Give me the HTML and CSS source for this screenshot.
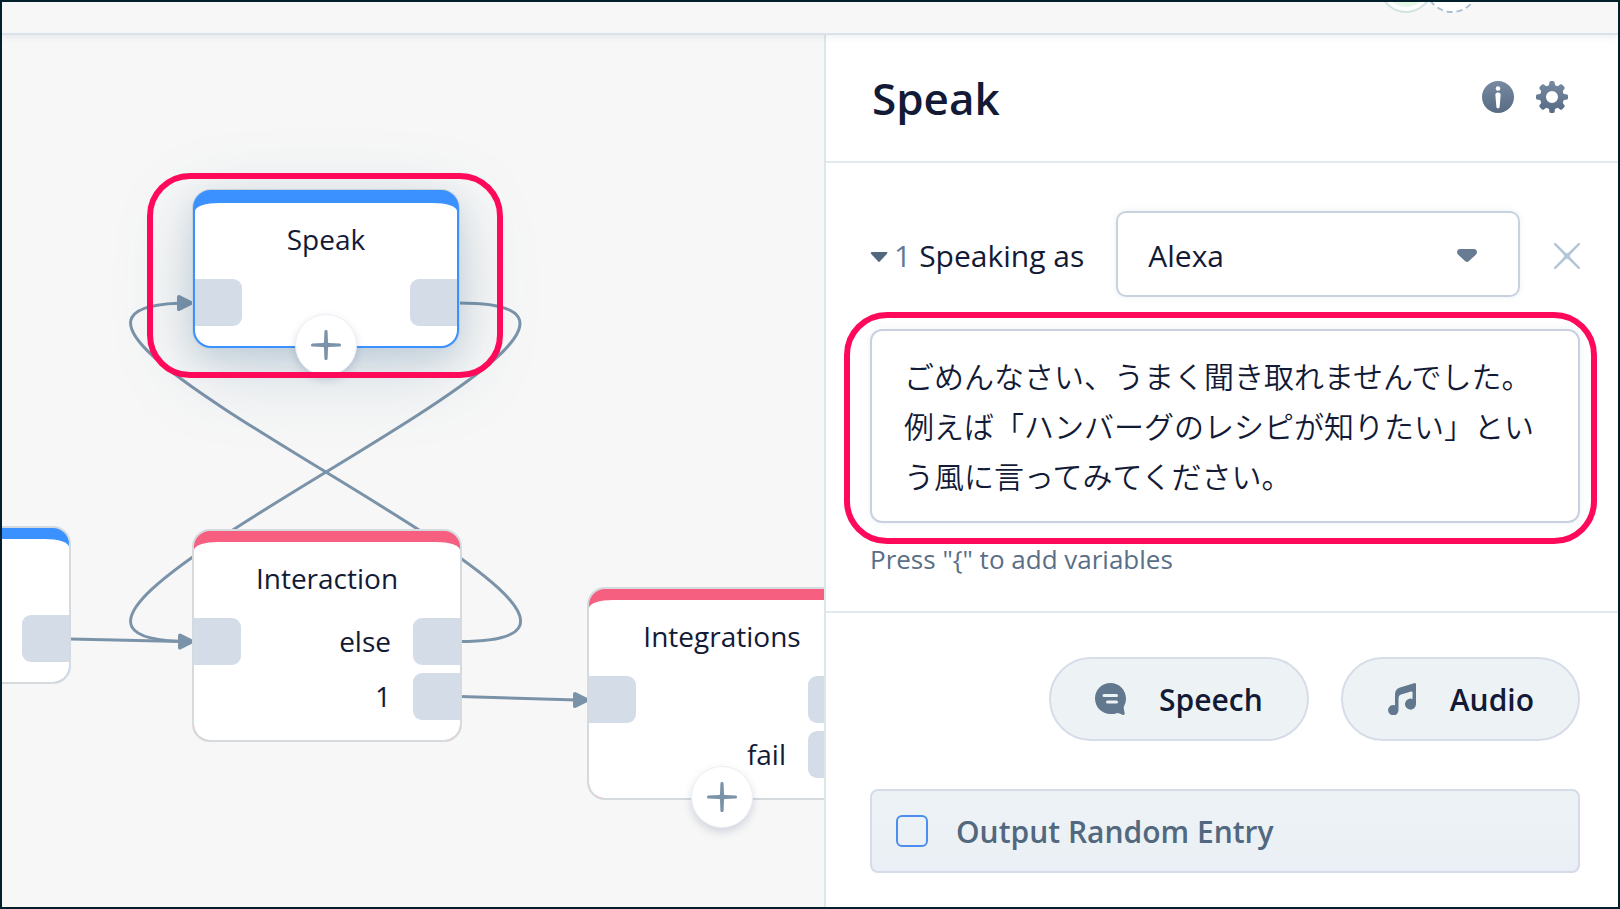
FILE: index.html
```html
<!DOCTYPE html>
<html lang="ja">
<head>
<meta charset="utf-8">
<title>Speak</title>
<link rel="stylesheet" href="styles.css">
</head>
<body>
<div class="app">
  <header class="topbar">
    <span class="avatar avatar--user"></span>
    <svg class="avatar" width="54" height="54" viewBox="0 0 54 54" aria-hidden="true"><circle cx="27" cy="27" r="26" fill="#fff" stroke="#a9bfd6" stroke-width="2" stroke-dasharray="6 4"/></svg>
  </header>
  <div class="workspace">
    <main class="canvas">
      <svg class="edges" aria-hidden="true">
        <g transform="translate(-2 -35)">
          <g class="edge-lines">
            <path d="M459 303C747 303 -94 641 190 641.500"/>
            <path d="M460 641.500C747 641.500 -94 303 190 303"/>
            <path d="M70 639L182 641.500"/>
            <path d="M460 696.500L577 700"/>
          </g>
          <g class="edge-heads">
            <path d="M179 297L191 303L179 309Z"/>
            <path d="M180 635.500L192 641.500L180 647.500Z"/>
            <path d="M575 694L587 700L575 706Z"/>
          </g>
        </g>
      </svg>

      <section class="node node--blue node--start">
        <div class="node__body">
          <h2 class="node__title"></h2>
          <div class="ports"><div class="ports__out"><div class="port-row"><span class="port port--out"></span></div></div></div>
        </div>
      </section>

      <section class="node node--blue node--speak">
        <div class="node__body">
          <h2 class="node__title">Speak</h2>
          <div class="ports">
            <span class="port port--in"></span>
            <div class="ports__out"><div class="port-row"><span class="port port--out"></span></div></div>
          </div>
        </div>
        <button class="add" type="button" aria-label="Add block">
          <svg width="32" height="32" viewBox="0 0 32 32"><path d="M16 1C17 1 17.500 1.600 17.600 2.500L18 12.800C18 13.600 18.400 14 19.200 14L29.500 14.400C30.500 14.500 31 15 31 16C31 17 30.500 17.500 29.500 17.600L19.200 18C18.400 18 18 18.400 18 19.200L17.600 29.500C17.500 30.500 17 31 16 31C15 31 14.500 30.500 14.400 29.500L14 19.200C14 18.400 13.600 18 12.800 18L2.500 17.600C1.500 17.500 1 17 1 16C1 15 1.500 14.500 2.500 14.400L12.800 14C13.600 14 14 13.600 14 12.800L14.400 2.500C14.500 1.600 15 1 16 1Z"/></svg>
        </button>
        <span class="marker marker--node"></span>
      </section>

      <section class="node node--red node--interaction">
        <div class="node__body">
          <h2 class="node__title">Interaction</h2>
          <div class="ports">
            <span class="port port--in"></span>
            <div class="ports__out">
              <div class="port-row">else<span class="port port--out"></span></div>
              <div class="port-row">1<span class="port port--out"></span></div>
            </div>
          </div>
        </div>
      </section>

      <section class="node node--red node--integrations">
        <div class="node__body">
          <h2 class="node__title">Integrations</h2>
          <div class="ports">
            <span class="port port--in"></span>
            <div class="ports__out">
              <div class="port-row"><span class="port port--out"></span></div>
              <div class="port-row">fail<span class="port port--out"></span></div>
            </div>
          </div>
        </div>
        <button class="add" type="button" aria-label="Add block">
          <svg width="32" height="32" viewBox="0 0 32 32"><path d="M16 1C17 1 17.500 1.600 17.600 2.500L18 12.800C18 13.600 18.400 14 19.200 14L29.500 14.400C30.500 14.500 31 15 31 16C31 17 30.500 17.500 29.500 17.600L19.200 18C18.400 18 18 18.400 18 19.200L17.600 29.500C17.500 30.500 17 31 16 31C15 31 14.500 30.500 14.400 29.500L14 19.200C14 18.400 13.600 18 12.800 18L2.500 17.600C1.500 17.500 1 17 1 16C1 15 1.500 14.500 2.500 14.400L12.800 14C13.600 14 14 13.600 14 12.800L14.400 2.500C14.500 1.600 15 1 16 1Z"/></svg>
        </button>
      </section>
    </main>

    <aside class="panel">
      <div class="panel__header">
        <h1 class="panel__title">Speak</h1>
        <div class="panel__actions">
          <button class="icon-button" type="button" aria-label="Info">
            <svg width="32" height="32" viewBox="0 0 32 32">
              <defs><linearGradient id="slate" x1="0" y1="0" x2="0" y2="32" gradientUnits="userSpaceOnUse"><stop offset="0" stop-color="#778aa1"/><stop offset="1" stop-color="#566b84"/></linearGradient></defs>
              <circle cx="16" cy="16" r="16" fill="url(#slate)"/>
              <circle cx="16" cy="7.500" r="2.300" fill="#fff"/>
              <path d="M16 11.500C17.800 11.500 18.700 12.300 18.600 14.200L17.600 26C17.500 27 17 27.200 16 27.200C15 27.200 14.500 27 14.400 26L13.400 14.200C13.300 12.300 14.200 11.500 16 11.500Z" fill="#fff"/>
            </svg>
          </button>
          <button class="icon-button" type="button" aria-label="Settings">
            <svg width="32" height="32" viewBox="0 0 32 32">
              <g fill="url(#slate)">
                <path fill-rule="evenodd" d="M16 4A12 12 0 1 0 16 28A12 12 0 1 0 16 4ZM16 10A6 6 0 1 1 16 22A6 6 0 1 1 16 10Z"/>
                <path d="M11.500 5.500C13 4.800 13.300 3.500 13.300 1.500Q13.500 0 15 0H17Q18.500 0 18.700 1.500C18.700 3.500 19 4.800 20.500 5.500Z"/>
                <path d="M11.500 26.500C13 27.200 13.300 28.500 13.300 30.500Q13.500 32 15 32H17Q18.500 32 18.700 30.500C18.700 28.500 19 27.200 20.500 26.500Z"/>
                <path d="M5.500 11.500C4.800 13 3.500 13.300 1.500 13.300Q0 13.500 0 15V17Q0 18.500 1.500 18.700C3.500 18.700 4.800 19 5.500 20.500Z"/>
                <path d="M26.500 11.500C27.200 13 28.500 13.300 30.500 13.300Q32 13.500 32 15V17Q32 18.500 30.500 18.700C28.500 18.700 27.200 19 26.500 20.500Z"/>
                <path d="M5 12.500C5.500 10.500 5 9.500 3.600 8Q3 7 3.600 6L6 3.600Q7 3 8 3.600C9.500 5 10.500 5.500 12.500 5Z"/>
                <path d="M27 12.500C26.500 10.500 27 9.500 28.400 8Q29 7 28.400 6L26 3.600Q25 3 24 3.600C22.500 5 21.500 5.500 19.500 5Z"/>
                <path d="M5 19.500C5.500 21.500 5 22.500 3.600 24Q3 25 3.600 26L6 28.400Q7 29 8 28.400C9.500 27 10.500 26.500 12.500 27Z"/>
                <path d="M27 19.500C26.500 21.500 27 22.500 28.400 24Q29 25 28.400 26L26 28.400Q25 29 24 28.400C22.500 27 21.500 26.500 19.500 27Z"/>
              </g>
            </svg>
          </button>
        </div>
      </div>

      <div class="entry">
        <div class="entry__row">
          <button class="toggle" type="button" aria-label="Collapse entry 1">
            <svg class="toggle__caret" width="18" height="12" viewBox="0 0 18 12"><path d="M2 1H16.500Q18 1.500 17 2.800L10 10.300Q9 11.500 8 10.300L1 2.800Q0 1.500 2 1Z" fill="#52687f"/></svg>
            <span>1</span>
          </button>
          <label class="entry__label" for="voice">Speaking as</label>
          <div class="select">
            <select id="voice"><option>Alexa</option></select>
            <svg class="select__arrow" width="20" height="14" viewBox="0 0 20 14"><path d="M2.500 0H17.500Q20 .3 20 3Q20 4.800 18.500 6L12 12Q10 14 8 12L1.500 6Q0 4.800 0 3Q0 .3 2.500 0Z" fill="#677b92"/></svg>
          </div>
          <button class="icon-button icon-button--close" type="button" aria-label="Remove entry">
            <svg width="26" height="26" viewBox="0 0 26 26"><path d="M0 0Q1.200 -.5 2.200 .6L11.500 9.500Q13 10.800 14.500 9.500L23.800 .6Q24.800 -.5 26 0Q26.500 1.200 25.400 2.200L16.500 11.500Q15.200 13 16.500 14.500L25.400 23.800Q26.500 24.800 26 26Q24.800 26.500 23.800 25.400L14.500 16.500Q13 15.200 11.500 16.500L2.200 25.400Q1.200 26.500 0 26Q-.5 24.800 .6 23.800L9.500 14.500Q10.800 13 9.500 11.500L.6 2.200Q-.5 1.200 0 0Z" fill="#b3c7d8"/></svg>
          </button>
        </div>
        <div class="message">
          <textarea class="message__input" rows="3" aria-label="Speech text" spellcheck="false">ごめんなさい、うまく聞き取れませんでした。例えば「ハンバーグのレシピが知りたい」という風に言ってみてください。</textarea>
          <span class="marker marker--message"></span>
        </div>
        <p class="hint">Press "{" to add variables</p>
      </div>

      <div class="panel__footer">
        <div class="add-buttons">
          <button class="pill" type="button">
            <svg width="32" height="32" viewBox="0 0 32 32"><path d="M15.500 0C24 0 31 6.800 31 15.500C31 18.500 30.200 21 29 23.300Q28.500 24.500 28.800 25.500L29.700 30.500Q29.700 32.300 28 31.900L24.500 30.400Q23 29.800 21.500 30.200C19.500 31 17.500 31 15.500 31C6.800 31 0 24 0 15.500C0 6.800 6.800 0 15.500 0Z" fill="#62788f"/><path d="M9 12.500H21.500M12.500 19H21.500" stroke="#edf3f5" stroke-width="3" stroke-linecap="round"/></svg>
            Speech
          </button>
          <button class="pill" type="button">
            <svg width="31" height="32" viewBox="-1 0 31 32"><path d="M7 24V11.500Q7 6 12 4.500L26 .2Q28 -.3 28 1.500V21A5.500 5.500 0 1 1 24.500 16V9.500Q24.500 8.200 23.200 8.600L13 11.500Q10.500 12.300 10.500 15V27A5.200 5.200 0 1 1 7 22.200Z" fill="#62788f"/></svg>
            Audio
          </button>
        </div>
        <label class="random">
          <input class="random__box" type="checkbox">
          Output Random Entry
        </label>
      </div>
    </aside>
  </div>
</div>
</body>
</html>
```
FILE: styles.css
```css
* {
  box-sizing: border-box;
}

body {
  margin: 0;
  color: #131a36;
  font-family: "Open Sans", "Noto Sans CJK JP", sans-serif;
  font-size: 30px;
}

h1, h2, p {
  margin: 0;
}

button {
  margin: 0;
  padding: 0;
  border: 0;
  background: none;
  color: inherit;
  font: inherit;
}

svg {
  display: block;
  flex: none;
}

.app {
  display: flex;
  flex-direction: column;
  min-height: 100vh;
  border: 2px solid #02202b;
  background: #f7f7f7;
}

/* Top bar */
.topbar {
  position: relative;
  z-index: 2;
  display: flex;
  align-items: flex-end;
  justify-content: flex-end;
  height: 33px;
  padding: 0 139px 20px 0;
  border-bottom: 2px solid #dbe3e8;
  box-shadow: 0 2px 6px rgba(90, 120, 150, .12);
  clip-path: inset(0 0 -8px 0);
}

.avatar {
  width: 54px;
  height: 54px;
  flex: none;
}

.avatar--user {
  z-index: 1;
  margin-right: -8px;
  padding: 4px;
  border: 2px solid #d2e4e0;
  border-radius: 50%;
  background: #e6f8e8 content-box;
  box-shadow: inset 0 0 0 4px #fff;
}

.workspace {
  display: grid;
  flex: 1;
  grid-template-columns: minmax(0, 822fr) minmax(0, 794fr);
}

/* Flow canvas */
.canvas {
  position: relative;
  overflow: hidden;
}

.edges {
  position: absolute;
  inset: 0;
  width: 100%;
  height: 100%;
}

.edge-lines {
  fill: none;
  stroke: #7b93a9;
  stroke-width: 3;
}

.edge-heads {
  fill: #7b93a9;
  stroke: #7b93a9;
  stroke-width: 4;
  stroke-linejoin: round;
}

.node {
  position: absolute;
  width: 270px;
  border: 2px solid #d4dadd;
  border-radius: 18px;
  font-size: 28px;
}

.node--blue {
  background: #3a91ff;
}

.node--red {
  background: #f75f80;
}

.node--start {
  left: -201px;
  top: 491px;
}

.node--speak {
  left: 191px;
  top: 155px;
  width: 266px;
  border-color: #3a91ff;
  box-shadow: 0 0 0 1px #c9d2d8, 0 10px 28px rgba(50, 100, 150, .16), 0 20px 80px rgba(60, 110, 140, .22);
}

.node--interaction {
  left: 190px;
  top: 494px;
}

.node--integrations {
  left: 585px;
  top: 552px;
}

.node__body {
  margin-top: 11px;
  padding: 16px 0 20px;
  border-radius: 24px 24px 16px 16px / 8px 8px 16px 16px;
  background: #fff;
}

.node__title {
  height: 40px;
  margin-bottom: 20px;
  font-size: 28px;
  font-weight: 400;
  line-height: 40px;
  text-align: center;
}

.ports {
  display: flex;
  justify-content: space-between;
}

.ports__out {
  display: grid;
  gap: 8px;
  margin-left: auto;
}

.port-row {
  display: flex;
  align-items: center;
  justify-content: flex-end;
  gap: 22px;
  line-height: 47px;
}

.port {
  width: 47px;
  height: 47px;
  background: #d4dce7;
}

.port--in {
  border-radius: 0 9px 9px 0;
}

.port--out {
  border-radius: 9px 0 0 9px;
}

.add {
  position: absolute;
  bottom: -30px;
  left: 50%;
  display: grid;
  width: 62px;
  height: 62px;
  margin-left: -31px;
  place-items: center;
  border: 1px solid #eeeff5;
  border-radius: 50%;
  background: #fff;
  box-shadow: 0 4px 8px rgba(70, 90, 130, .22);
  fill: #7b93a9;
}

.marker {
  position: absolute;
  border: 6px solid #ff0a5a;
  border-radius: 43px;
  pointer-events: none;
}

.marker--node {
  inset: -19px -46px -32px -48px;
}

.marker--message {
  inset: -17px -17px -21px -26px;
}

/* Side panel */
.panel {
  border-left: 2px solid #dce5ea;
  background: #fff;
}

.panel__header {
  display: flex;
  align-items: center;
  justify-content: space-between;
  height: 128px;
  padding: 0 50px 0 46px;
  border-bottom: 2px solid #e3eaef;
}

.panel__title {
  font-size: 44px;
  font-weight: 600;
  line-height: 60px;
}

.panel__actions {
  display: flex;
  gap: 22px;
  padding-bottom: 2px;
}

.entry {
  padding: 48px 38px 34px 44px;
  border-bottom: 2px solid #e3eaef;
}

.entry__row {
  display: flex;
  align-items: center;
  margin-bottom: 32px;
}

.toggle {
  display: flex;
  align-items: center;
  gap: 6px;
  padding-top: 2px;
  color: #5f7a91;
}

.toggle__caret {
  margin-top: 4px;
}

.entry__label {
  margin: 0 32px 0 8px;
  padding-top: 2px;
  white-space: nowrap;
}

.select {
  position: relative;
  flex: 1;
  margin-right: 34px;
}

.select select {
  display: block;
  width: 100%;
  height: 86px;
  padding: 2px 80px 0 30px;
  appearance: none;
  border: 2px solid #c8d2df;
  border-radius: 10px;
  background: #fff;
  box-shadow: 0 0 6px rgba(60, 100, 140, .1);
  color: inherit;
  font: inherit;
}

.select__arrow {
  position: absolute;
  top: 38px;
  right: 43px;
  pointer-events: none;
}

.icon-button--close {
  padding-top: 4px;
}

.message {
  position: relative;
}

.message__input {
  display: block;
  width: 100%;
  height: 194px;
  padding: 19px 32px;
  overflow: hidden;
  resize: none;
  border: 2px solid #c9d0df;
  border-radius: 12px;
  background: #fff;
  box-shadow: 0 0 8px rgba(60, 100, 140, .08);
  color: inherit;
  font-family: "Noto Sans CJK JP", sans-serif;
  font-size: 30px;
  font-weight: 350;
  line-height: 50px;
}

.hint {
  margin-top: 18px;
  color: #5a6f86;
  font-size: 26px;
  line-height: 36px;
}

.panel__footer {
  padding: 44px 38px 34px 44px;
}

.add-buttons {
  display: flex;
  justify-content: flex-end;
  gap: 32px;
  margin-bottom: 48px;
}

.pill {
  display: flex;
  align-items: center;
  gap: 32px;
  height: 84px;
  padding: 0 44px;
  border: 2px solid #d7dce9;
  border-radius: 42px;
  background: #edf3f5;
  font-weight: 600;
}

.random {
  display: flex;
  align-items: center;
  gap: 28px;
  height: 84px;
  padding: 0 24px;
  border: 2px solid #d5dbe8;
  border-radius: 8px;
  background: linear-gradient(#edf3f5, #e9eff4);
  color: #52687f;
  font-weight: 600;
}

.random__box {
  width: 32px;
  height: 32px;
  margin: 0;
  appearance: none;
  border: 2px solid #4c8df0;
  border-radius: 6px;
}
```
